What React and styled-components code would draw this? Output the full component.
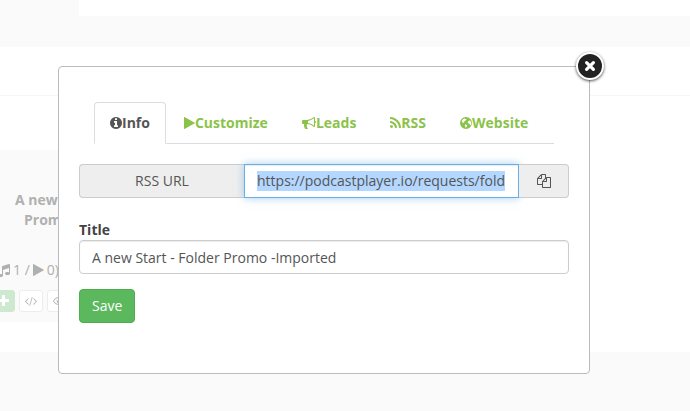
import React, { useEffect, useRef } from 'react'
import styled, { createGlobalStyle } from 'styled-components'
import { FaRegEye } from 'react-icons/fa'

const GlobalStyle = createGlobalStyle`
  * {
    box-sizing: border-box;
  }
  body {
    margin: 0;
    background: #fafafa;
    color: #444;
    font-family: 'Open Sans', 'Noto Sans', sans-serif;
    font-size: 14px;
    line-height: 20px;
  }
  button, input {
    font: inherit;
  }
`

const Page = styled.div`
  min-height: 100vh;
  overflow: hidden;
`
const TopPanel = styled.div`
  height: 16px;
  margin-left: 79px;
  background: #fff;
`
const Content = styled.main`
  margin-top: 31px;
  background: #fff;
  padding-bottom: 30px;
`
const Heading = styled.div`
  height: 49px;
  border-bottom: 1px solid #f5f5f5;
`
const Card = styled.article`
  width: 120px;
  margin-top: 54px;
  padding-top: 40px;
  height: 172px;
  background: #fafafa;
  color: #b0b0b0;
`
const CardTitle = styled.h4`
  margin: 0 0 30px;
  padding-left: 15px;
  font-size: 14px;
  line-height: 20px;

  span {
    display: block;
    padding-left: 9px;
  }
`
const Stats = styled.div`
  display: flex;
  align-items: center;
  gap: 3px;
  margin-left: -2px;
`
const CardActions = styled.div`
  display: flex;
  gap: 4px;
  margin: 10px 0 0 -8px;
`
const SmallButton = styled.button`
  display: flex;
  align-items: center;
  justify-content: center;
  height: 22px;
  padding: 0 5px;
  border: 1px solid ${p => (p.$green ? '#cdead0' : '#ededed')};
  border-radius: 3px;
  background: ${p => (p.$green ? '#cdead0' : '#fff')};
  color: ${p => (p.$green ? '#fff' : '#b8b8b8')};
`

const Overlay = styled.div`
  position: absolute;
  top: 0;
  left: 0;
  width: 100%;
  padding: 66px 100px 37px 58px;
`
const ModalBox = styled.section`
  position: relative;
  padding: 35px 20px 50px;
  border: 1px solid #bbb;
  border-radius: 4px;
  background: #fff;
`
const CloseButton = styled.button`
  position: absolute;
  top: -15px;
  right: -15px;
  display: flex;
  align-items: center;
  justify-content: center;
  width: 28px;
  height: 28px;
  padding: 0;
  border: 2px solid #fff;
  border-radius: 50%;
  background: #222;
  color: #fff;
  box-shadow: 0 1px 3px rgba(0, 0, 0, 0.7);
`
const Tabs = styled.nav`
  display: flex;
  gap: 2px;
  margin: 0 15px 20px;
  border-bottom: 1px solid #ddd;
`
const Tab = styled.a`
  display: flex;
  align-items: center;
  margin-bottom: -1px;
  padding: 10px 15px;
  border: 1px solid ${p => (p.$active ? '#ddd' : 'transparent')};
  border-bottom-color: ${p => (p.$active ? '#fff' : 'transparent')};
  border-radius: 4px 4px 0 0;
  color: ${p => (p.$active ? '#555' : '#8bc34a')};
  font-weight: 700;
  text-decoration: none;
`
const InputGroup = styled.div`
  display: grid;
  grid-template-columns: 3fr 5fr 50px;
  height: 34px;
  margin-bottom: 22px;
`
const AddonLabel = styled.label`
  padding: 6px 12px;
  border: 1px solid #ccc;
  border-right: 0;
  border-radius: 4px 0 0 4px;
  background: #eee;
  color: #555;
  text-align: center;
`
const UrlInput = styled.input`
  min-width: 0;
  width: 100%;
  padding: 6px 12px;
  border: 1px solid #66afe9;
  outline: 0;
  color: #555;
  box-shadow: inset 0 1px 1px rgba(0, 0, 0, 0.08), 0 0 8px rgba(102, 175, 233, 0.6);

  &::selection {
    background: #b3d7ff;
    color: #555;
  }
`
const CopyButton = styled.button`
  display: flex;
  align-items: center;
  justify-content: center;
  border: 1px solid #ccc;
  border-left: 0;
  border-radius: 0 4px 4px 0;
  background: #eee;
  color: #555;
`
const Label = styled.label`
  display: block;
  font-weight: 700;
`
const TextInput = styled.input`
  display: block;
  width: 100%;
  height: 34px;
  margin-bottom: 15px;
  padding: 6px 12px;
  border: 1px solid #ccc;
  border-radius: 4px;
  color: #555;
  box-shadow: inset 0 1px 1px rgba(0, 0, 0, 0.08);
`
const SaveButton = styled.button`
  display: block;
  height: 34px;
  padding: 6px 12px;
  border: 1px solid #4cae4c;
  border-radius: 4px;
  background: #5cb85c;
  color: #fff;
  font-weight: 500;
`

// glyphs on a 1792 unit em, x is the left edge and w the advance
const glyphs = {
  info: { x: 128, w: 1536, d: 'M1152 1376v-160q0-14-9-23t-23-9h-96v-512q0-14-9-23t-23-9h-320q-14 0-23 9t-9 23v160q0 14 9 23t23 9h96v320h-96q-14 0-23 9t-9 23v160q0 14 9 23t23 9h448q14 0 23-9t9-23zm-128-896v-160q0-14-9-23t-23-9h-192q-14 0-23 9t-9 23v160q0 14 9 23t23 9h192q14 0 23-9t9-23zm640 416q0 209-103 385.5t-279.5 279.5-385.5 103-385.5-103-279.5-279.5-103-385.5 103-385.5 279.5-279.5 385.5-103 385.5 103 279.5 279.5 103 385.5z' },
  play: { x: 192, w: 1408, d: 'M1576 927l-1328 738q-23 13-39.5 3t-16.5-36v-1472q0-26 16.5-36t39.5 3l1328 738q23 13 23 31t-23 31z' },
  bullhorn: { x: 0, w: 1792, d: 'M1664 640q53 0 90.5 37.5t37.5 90.5-37.5 90.5-90.5 37.5v384q0 52-38 90t-90 38q-417-347-812-380-58 19-91 66t-31 100.5 40 92.5q-20 33-23 65.5t6 58 33.5 55 48 50 61.5 50.5q-29 58-111.5 83t-168.5 11.5-132-55.5q-7-23-29.5-87.5t-32-94.5-23-89-15-101 3.5-98.5 22-110.5h-122q-66 0-113-47t-47-113v-192q0-66 47-113t113-47h480q435 0 896-384 52 0 90 38t38 90v384zm-128 604v-954q-394 302-768 343v270q377 42 768 341z' },
  rss: { x: 192, w: 1408, d: 'M576 1344q0 80-56 136t-136 56-136-56-56-136 56-136 136-56 136 56 56 136zm512 123q2 28-17 48-18 21-47 21h-135q-25 0-43-16.5t-20-41.5q-22-229-184.5-391.5t-391.5-184.5q-25-2-41.5-20t-16.5-43v-135q0-29 21-47 17-17 43-17h5q160 13 306 80.5t259 181.5q114 113 181.5 259t80.5 306zm512 2q2 27-18 47-18 20-46 20h-143q-26 0-44.5-17.5t-19.5-42.5q-12-215-101-408.5t-231.5-336-336-231.5-408.5-102q-25-1-42.5-19.5t-17.5-43.5v-143q0-28 20-46 18-18 44-18h3q262 13 501.5 120t425.5 294q187 186 294 425.5t120 501.5z' },
  globe: { x: 128, w: 1536, d: 'M896 128a768 768 0 1 1 0 1536a768 768 0 1 1 0-1536zM740 310l-170 60-160 150-50 150 60 140 110 70 110-60 20-120 130-60 100-130 90-60-60-80-90 10zM1250 600l-110 110-20 160 110 100 130 10 50 170 80 20 70-160 0-190-60-150-110-110zM800 1080l-70 120 80 120 30 170 120-80 100-160-60-100-120-60z' },
  copy: { x: 0, w: 1792, d: 'M1696 384q40 0 68 28t28 68v1216q0 40-28 68t-68 28h-960q-40 0-68-28t-28-68v-288h-544q-40 0-68-28t-28-68v-672q0-40 20-88t48-76l408-408q28-28 76-48t88-20h416q40 0 68 28t28 68v328q68-40 128-40h416zm-544 213l-299 299h299v-299zm-640-384l-299 299h299v-299zm196 647l316-316v-416h-384v416q0 40-28 68t-68 28h-416v640h512v-256q0-40 20-88t48-76zm956 804v-1152h-384v416q0 40-28 68t-68 28h-416v640h896z' },
  code: { x: 109, w: 1830, d: 'M681 1399l-50 50q-10 10-23 10t-23-10l-466-466q-10-10-10-23t10-23l466-466q10-10 23-10t23 10l50 50q10 10 10 23t-10 23l-393 393 393 393q10 10 10 23t-10 23zm591-1067l-373 1291q-4 13-15.5 19.5t-23.5 2.5l-62-17q-13-4-19.5-15.5t-2.5-24.5l373-1291q4-13 15.5-19.5t23.5-2.5l62 17q13 4 19.5 15.5t2.5 24.5zm657 651l-466 466q-10 10-23 10t-23-10l-50-50q-10-10-10-23t10-23l393-393-393-393q-10-10-10-23t10-23l50-50q10-10 23-10t23 10l466 466q10 10 10 23t-10 23z' },
  plus: { x: 192, w: 1408, d: 'M1600 736v192q0 40-28 68t-68 28h-416v416q0 40-28 68t-68 28h-192q-40 0-68-28t-28-68v-416h-416q-40 0-68-28t-28-68v-192q0-40 28-68t68-28h416v-416q0-40 28-68t68-28h192q40 0 68 28t28 68v416h416q40 0 68 28t28 68z' },
  music: { x: 128, w: 1536, d: 'M1664 224v1120q0 50-34 89t-86 60.5-103.5 32-96.5 10.5-96.5-10.5-103.5-32-86-60.5-34-89 34-89 86-60.5 103.5-32 96.5-10.5q105 0 192 39v-537l-768 237v709q0 50-34 89t-86 60.5-103.5 32-96.5 10.5-96.5-10.5-103.5-32-86-60.5-34-89 34-89 86-60.5 103.5-32 96.5-10.5q105 0 192 39v-967q0-31 19-56.5t49-35.5l832-256q12-4 28-4 40 0 68 28t28 68z' },
}

function Icon({ name, size = 14 }) {
  const { x, w, d } = glyphs[name]
  return (
    <svg
      viewBox={`${x} 0 ${w} 1792`}
      width={Math.round((size * w) / 1792)}
      height={size}
      fill="currentColor"
      fillRule="evenodd"
      aria-hidden="true"
    >
      <path d={d} />
    </svg>
  )
}

function Cross() {
  return (
    <svg viewBox="0 0 12 12" width="12" height="12" stroke="currentColor" strokeWidth="3.2" strokeLinecap="round" aria-hidden="true">
      <path d="M2.6 2.6L9.4 9.4M9.4 2.6L2.6 9.4" />
    </svg>
  )
}

function EpisodeCard() {
  return (
    <Card>
      <CardTitle>
        A new <span>Promo</span>
      </CardTitle>
      <Stats>
        <Icon name="music" /> 1 / <Icon name="play" /> 0)
      </Stats>
      <CardActions>
        <SmallButton $green aria-label="Add"><Icon name="plus" /></SmallButton>
        <SmallButton aria-label="Embed"><Icon name="code" size={12} /></SmallButton>
        <SmallButton aria-label="Preview"><FaRegEye size={12} /></SmallButton>
      </CardActions>
    </Card>
  )
}

function Modal({ children }) {
  return (
    <Overlay>
      <ModalBox role="dialog" aria-label="Folder settings">
        <CloseButton aria-label="Close"><Cross /></CloseButton>
        {children}
      </ModalBox>
    </Overlay>
  )
}

function App() {
  const urlRef = useRef(null)

  useEffect(() => {
    urlRef.current.focus()
    urlRef.current.select()
  }, [])

  return (
    <>
      <GlobalStyle />
      <Page>
        <TopPanel />
        <Content>
          <Heading />
          <EpisodeCard />
        </Content>
      </Page>
      <Modal>
        <Tabs>
          <Tab href="#info" $active><Icon name="info" />Info</Tab>
          <Tab href="#customize"><Icon name="play" />Customize</Tab>
          <Tab href="#leads"><Icon name="bullhorn" />Leads</Tab>
          <Tab href="#rss"><Icon name="rss" />RSS</Tab>
          <Tab href="#website"><Icon name="globe" />Website</Tab>
        </Tabs>
        <InputGroup>
          <AddonLabel htmlFor="rss-url">RSS URL</AddonLabel>
          <UrlInput id="rss-url" ref={urlRef} readOnly value="https://podcastplayer.io/requests/fold" />
          <CopyButton aria-label="Copy"><Icon name="copy" /></CopyButton>
        </InputGroup>
        <Label htmlFor="title">Title</Label>
        <TextInput id="title" defaultValue="A new Start - Folder Promo -Imported" />
        <SaveButton>Save</SaveButton>
      </Modal>
    </>
  )
}

export default App
